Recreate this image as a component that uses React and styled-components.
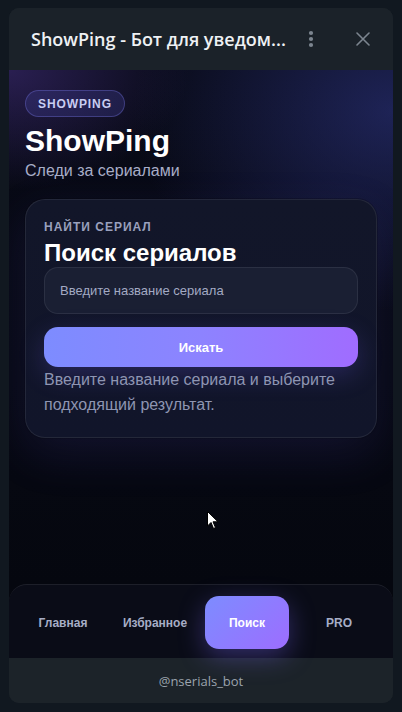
import React from "react";
import styled, { createGlobalStyle } from "styled-components";

const Global = createGlobalStyle`
  html, body { margin: 0; padding: 0; background: #111820; }
  body { font-family: "Liberation Sans", Arial, sans-serif; }
  * { box-sizing: border-box; }
`;

const Stage = styled.div`
  position: relative;
  width: 402px;
  height: 712px;
  padding: 8px 9px 9px;
  background: #111820;
`;

const Window = styled.div`
  height: 695px;
  display: flex;
  flex-direction: column;
  border-radius: 10px;
  overflow: hidden;
  background: #1b2229;
`;

const TitleBar = styled.header`
  height: 62px;
  flex: none;
  display: flex;
  align-items: center;
  padding: 0 18px 0 22px;
  background: #1b2229;
`;

const TitleText = styled.div`
  flex: 1;
  font-family: "Open Sans", "Noto Sans", sans-serif;
  font-size: 18px;
  font-weight: 600;
  color: #eef1f4;
  white-space: nowrap;
`;

const IconButton = styled.button`
  border: 0;
  background: none;
  padding: 0;
  display: flex;
  align-items: center;
  justify-content: center;
  width: 24px;
  height: 24px;
  margin-left: ${(p) => p.$gap || 0}px;
  color: #7c858f;
`;

const Main = styled.main`
  flex: 1;
  display: flex;
  flex-direction: column;
  padding: 20px 16px 0;
  background:
    radial-gradient(ellipse 180px 120px at 0% 0%, rgba(92, 62, 170, 0.4), transparent 100%),
    radial-gradient(ellipse 260px 200px at 100% 8%, rgba(52, 60, 150, 0.5), transparent 100%),
    linear-gradient(180deg, #080a16 0%, #070913 60%, #05070f 100%);
`;

const Badge = styled.span`
  align-self: flex-start;
  height: 27px;
  display: inline-flex;
  align-items: center;
  padding: 0 12px;
  border-radius: 999px;
  border: 1px solid rgba(120, 120, 230, 0.35);
  background: rgba(70, 70, 160, 0.28);
  color: #c9cdf2;
  font-size: 12px;
  font-weight: 700;
  letter-spacing: 0.9px;
`;

const AppTitle = styled.h1`
  margin: 7px 0 0;
  font-size: 30px;
  line-height: 34px;
  font-weight: 700;
  color: #ffffff;
`;

const Tagline = styled.p`
  margin: 4px 0 0;
  font-size: 16px;
  line-height: 18px;
  color: #a8aec8;
`;

const Card = styled.section`
  margin-top: 19px;
  padding: 20px 18px 20px;
  border-radius: 20px;
  background: linear-gradient(180deg, #121629 0%, #11152a 100%);
  border: 1px solid rgba(255, 255, 255, 0.08);
  box-shadow: 0 16px 48px rgba(95, 80, 210, 0.14), 0 0 0 1px rgba(0, 0, 0, 0.2);
`;

const Eyebrow = styled.div`
  font-size: 12px;
  font-weight: 700;
  letter-spacing: 1px;
  color: #9aa0bd;
  line-height: 14px;
`;

const CardTitle = styled.h2`
  margin: 5px 0 0;
  font-size: 24px;
  line-height: 28px;
  font-weight: 700;
  color: #ffffff;
`;

const SearchInput = styled.input`
  display: block;
  width: 100%;
  height: 47px;
  margin-top: 0;
  padding: 0 15px;
  border-radius: 14px;
  border: 1px solid rgba(255, 255, 255, 0.08);
  background: #1a1f33;
  color: #fff;
  font-family: "Liberation Sans", Arial, sans-serif;
  font-size: 13px;
  outline: none;
  &::placeholder { color: #a3aac4; }
`;

const PrimaryButton = styled.button`
  display: block;
  width: 100%;
  height: 40px;
  margin-top: 13px;
  border: 0;
  border-radius: 14px;
  background: linear-gradient(90deg, #7d8cff 0%, #8d83ff 50%, #a06cff 100%);
  color: #ffffff;
  font-family: "Liberation Sans", Arial, sans-serif;
  font-size: 13px;
  font-weight: 700;
  box-shadow: 0 8px 26px rgba(120, 100, 255, 0.22);
`;

const Hint = styled.p`
  margin: 0;
  font-size: 16px;
  line-height: 25px;
  color: #8e95b2;
`;

const NavWrap = styled.div`
  background: #05070f;
  padding-top: 18px;
  flex: none;
`;

const Nav = styled.nav`
  height: 74px;
  display: grid;
  grid-template-columns: repeat(4, 1fr);
  gap: 8px;
  padding: 11px 12px 9px;
  background: #0a0c17;
  border-top: 1px solid rgba(255, 255, 255, 0.08);
  border-radius: 18px 18px 0 0;
  margin-top: -18px;
  position: relative;
`;

const NavItem = styled.button`
  border: 0;
  border-radius: 14px;
  display: flex;
  align-items: center;
  justify-content: center;
  font-family: "Liberation Sans", Arial, sans-serif;
  font-size: 12px;
  font-weight: 700;
  color: ${(p) => (p.$active ? "#ffffff" : "#a7aec6")};
  background: ${(p) =>
    p.$active ? "linear-gradient(135deg, #7d8cff 0%, #9d6dff 100%)" : "transparent"};
  box-shadow: ${(p) => (p.$active ? "0 8px 26px rgba(125, 105, 255, 0.35)" : "none")};
`;

const Footer = styled.footer`
  height: 45px;
  flex: none;
  display: flex;
  align-items: center;
  justify-content: center;
  background: #1c2329;
  font-family: "Open Sans", "Noto Sans", sans-serif;
  font-size: 13px;
  color: #9ba4ad;
`;

const Pointer = styled.svg`
  position: absolute;
  left: 207px;
  top: 511px;
`;

const tabs = ["Главная", "Избранное", "Поиск", "PRO"];

export default function App() {
  return (
    <Stage>
      <Global />
      <Window>
        <TitleBar>
          <TitleText>ShowPing - Бот для уведом...</TitleText>
          <IconButton aria-label="menu">
            <svg width="6" height="18" viewBox="0 0 6 18">
              <circle cx="3" cy="3" r="2.1" fill="currentColor" />
              <circle cx="3" cy="9" r="2.1" fill="currentColor" />
              <circle cx="3" cy="15" r="2.1" fill="currentColor" />
            </svg>
          </IconButton>
          <IconButton aria-label="close" $gap={28}>
            <svg width="14" height="14" viewBox="0 0 14 14">
              <path d="M1 1 L13 13 M13 1 L1 13" stroke="currentColor" strokeWidth="1.6" strokeLinecap="round" />
            </svg>
          </IconButton>
        </TitleBar>
        <Main>
          <Badge>SHOWPING</Badge>
          <AppTitle>ShowPing</AppTitle>
          <Tagline>Следи за сериалами</Tagline>
          <Card>
            <Eyebrow>НАЙТИ СЕРИАЛ</Eyebrow>
            <CardTitle>Поиск сериалов</CardTitle>
            <SearchInput placeholder="Введите название сериала" />
            <PrimaryButton>Искать</PrimaryButton>
            <Hint>Введите название сериала и выберите подходящий результат.</Hint>
          </Card>
        </Main>
        <NavWrap>
          <Nav>
            {tabs.map((t) => (
              <NavItem key={t} $active={t === "Поиск"}>
                {t}
              </NavItem>
            ))}
          </Nav>
        </NavWrap>
        <Footer>@nserials_bot</Footer>
      </Window>
      <Pointer width="12" height="19" viewBox="0 0 12 19">
        <path d="M0.5 0.5 L0.5 15 L4 11.5 L6.5 17.5 L8.5 16.6 L6 10.8 L11 10.8 Z" fill="#ffffff" stroke="#000" strokeWidth="1" />
      </Pointer>
    </Stage>
  );
}
